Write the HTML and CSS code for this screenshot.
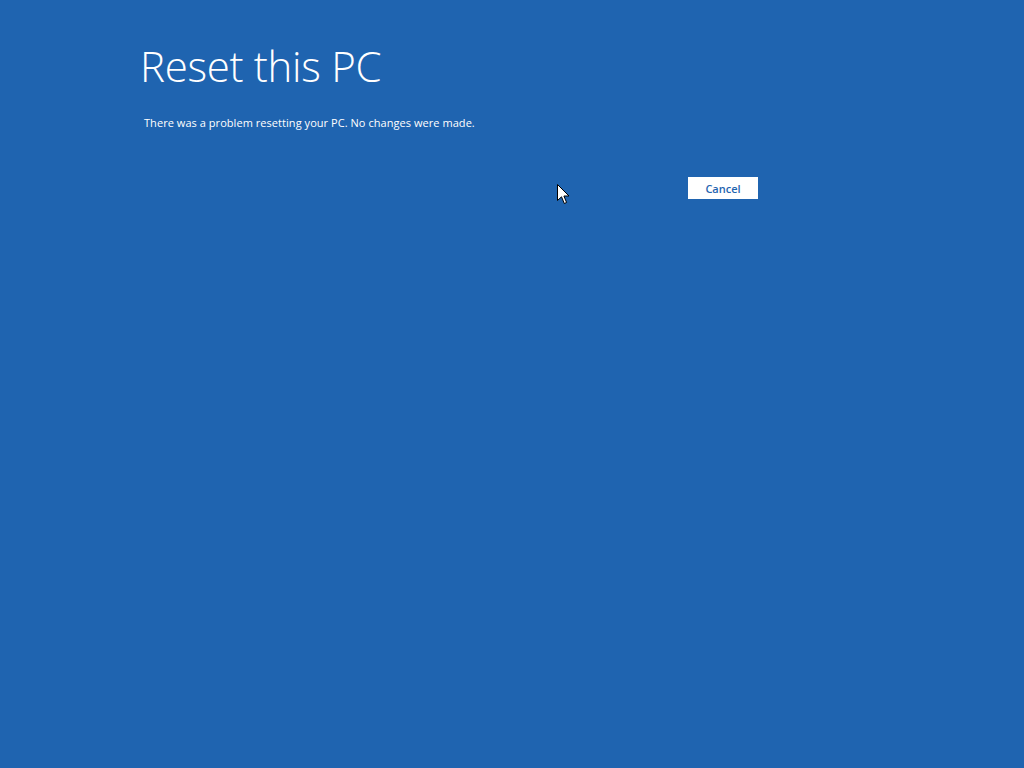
FILE: index.html
```html
<!DOCTYPE html>
<html lang="en">
<head>
  <meta charset="UTF-8" />
  <title>Reset this PC</title>
  <link rel="stylesheet" href="styles.css">
</head>
<body>
  <div class="container">
    <h1>Reset this PC</h1>
    <p class="message">There was a problem resetting your PC. No changes were made.</p>
    <div class="actions">
      <button class="cancel-btn">Cancel</button>
    </div>
  </div>

  <svg class="cursor" width="13" height="21" viewBox="0 0 13 21">
    <path d="M0.5 0.5 L0.5 16.5 L4.5 12.8 L7.3 19.5 L9.6 18.5 L6.9 12 L12 12 Z" fill="#fff" stroke="#000" stroke-width="1"/>
  </svg>
</body>
</html>
```

FILE: styles.css
```css
html, body { height: 100%; }
body {
  margin: 0;
  background: #1f64b0;
  font-family: "Open Sans", "Noto Sans", sans-serif;
  color: #fff;
  overflow: hidden;
}
.container { width: 618px; padding: 36px 0 0 140px; }
h1 {
  margin: 0;
  font-size: 42px;
  font-weight: 300;
  letter-spacing: -0.3px;
  line-height: 60px;
}
.message {
  margin: 19px 0 0 4px;
  font-size: 11px;
  letter-spacing: 0.05px;
  line-height: 16px;
}
.actions { display: flex; justify-content: flex-end; margin-top: 46px; }
.cancel-btn {
  width: 70px;
  height: 22px;
  border: none;
  background: #fff;
  color: #1f64b0;
  font-family: "Open Sans", sans-serif;
  font-size: 11px;
  font-weight: 600;
  padding: 0;
  cursor: default;
}
.cursor { position: absolute; left: 557px; top: 184px; }
```
